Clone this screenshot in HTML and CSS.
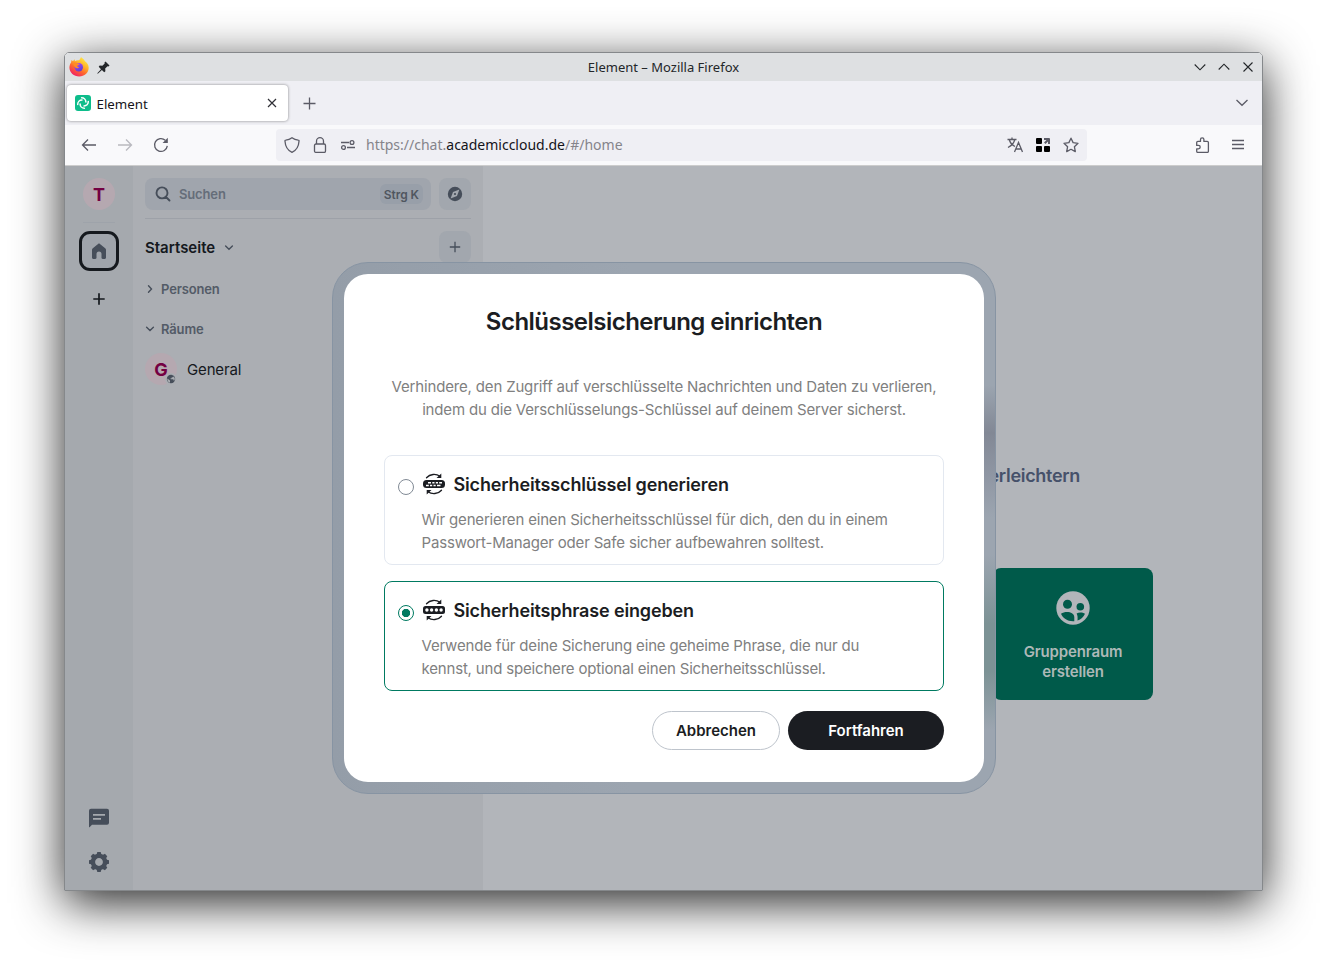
FILE: index.html
```html
<!DOCTYPE html>
<html lang="de">
<head>
<meta charset="utf-8">
<title>Element</title>
<link rel="stylesheet" href="styles.css">
</head>
<body>
<div class="window">
  <header class="titlebar">
    <div class="title-left">
      <svg class="firefox" width="20" height="20" viewBox="0 0 20 20">
        <defs>
          <linearGradient id="fx" x1="0.85" y1="0.05" x2="0.25" y2="1"><stop offset="0" stop-color="#fff04a"/><stop offset=".35" stop-color="#ffb52a"/><stop offset=".62" stop-color="#ff6a2c"/><stop offset="1" stop-color="#f0186c"/></linearGradient>
          <linearGradient id="fy" x1="0.3" y1="0" x2="0.7" y2="1"><stop offset="0" stop-color="#a646ff"/><stop offset="1" stop-color="#5b3fd0"/></linearGradient>
        </defs>
        <path fill="url(#fx)" d="M12 0c1.300 1.300 2.800 2 4 4.200 2.100 1.500 3.700 3.500 3.700 6.600 0 4.900-4.200 8.800-9.500 8.800S.4 15.700.4 10.600c0-2 .8-4 1.700-5.200L2.500 3l1.500 1.300L5.500 2.200l.4 2c1.200-.8 2.400-1 3.900-.9 1-.8 1.700-1.800 2.200-3.300z"/>
        <circle cx="9.800" cy="10.200" r="4.200" fill="url(#fy)"/>
        <path fill="#ff8b24" d="M4.500 6c2-.8 3-.4 4 .6l2 .3c-.4 1-1.200 1.300-2.200 1.600-.3 1.500 1.200 2 2.200 1.500-.8 1.500-3.200 1.700-4.200.5C5 9.300 4.300 8 4.500 6z"/>
      </svg>
      <svg class="pin" width="13" height="13" viewBox="0 0 13 13"><path fill="#232629" d="M8.500.5 12.500 4.500l-1 1-1-.2-2.300 2.300.2 2.700-1.200 1-2.300-2.300L.8 12.700.3 12.200 4 8.200 1.700 5.800l1-1.200 2.700.2 2.300-2.300-.2-1z"/></svg>
    </div>
    <div class="title-text">Element – Mozilla Firefox</div>
    <div class="title-right">
      <svg width="12" height="12" viewBox="0 0 12 12"><path d="M.7 3.500 6 8.800l5.300-5.300"/></svg>
      <svg width="12" height="12" viewBox="0 0 12 12"><path d="M.7 8.500 6 3.200l5.300 5.300"/></svg>
      <svg width="12" height="12" viewBox="0 0 12 12"><path d="m1.500 1.500 9 9m0-9-9 9"/></svg>
    </div>
  </header>

  <div class="tabbar">
    <div class="tab">
      <svg width="16" height="16" viewBox="0 0 16 16"><rect width="16" height="16" rx="3" fill="#0dbd8b"/><g fill="none" stroke="#fff" stroke-width="1.500" stroke-linecap="round"><path id="arc" d="M6.600 2.700a4.300 4.300 0 0 1 4.300 4.300"/><use href="#arc" transform="rotate(90 8 8)"/><use href="#arc" transform="rotate(180 8 8)"/><use href="#arc" transform="rotate(270 8 8)"/></g></svg>
      <span class="tab-name">Element</span>
      <svg class="line dark" width="10" height="10" viewBox="0 0 10 10"><path d="m1 1 8 8m0-8-8 8"/></svg>
    </div>
    <svg class="line newtab" width="13" height="13" viewBox="0 0 13 13"><path d="M6.500.5v12M.5 6.500h12"/></svg>
    <svg class="line tablist" width="14" height="14" viewBox="0 0 14 14"><path d="M1.500 4 7 9.300 12.500 4"/></svg>
  </div>

  <nav class="toolbar">
    <svg class="line back" width="16" height="16" viewBox="0 0 16 16"><path d="M15 8H1.700M7 2.500 1.500 8 7 13.500"/></svg>
    <svg class="line fwd" width="16" height="16" viewBox="0 0 16 16"><path d="M1 8h13.300M9 2.500 14.500 8 9 13.500"/></svg>
    <svg class="line reload" width="16" height="16" viewBox="0 0 16 16"><path d="M14.300 8.800A6.400 6.400 0 1 1 12.300 3.300"/><path d="M14.800.8v5.200H9.600z" fill="#5b5b66" stroke="none"/></svg>
    <div class="urlbar">
      <svg class="line" width="16" height="16" viewBox="0 0 16 16"><path d="M8 .8c1.800 1.400 4 2.200 6.200 2.300.7 0 .9.500.8 1.200-.3 5-2.300 9-7 11-4.700-2-6.700-6-7-11-.1-.7.200-1.200.8-1.200C4 3 6.200 2.200 8 .8z"/></svg>
      <svg class="line" width="16" height="16" viewBox="0 0 16 16"><rect x="2.500" y="7" width="11" height="8.400" rx="1.500"/><path d="M4.500 7V4.200a3.500 3.500 0 0 1 7 0V7"/></svg>
      <svg class="line" width="16" height="16" viewBox="0 0 16 16"><path d="M1 5.500h8M7 10.500h8"/><circle cx="12" cy="5.500" r="1.900"/><circle cx="3.500" cy="10.500" r="1.900"/></svg>
      <span class="url">https://chat.<b>academiccloud.de</b>/#/home</span>
      <svg class="line translate" width="16" height="16" viewBox="0 0 16 16"><path d="M.5 2.500h9M5 .5v2M2.300 2.500C3 6 5.500 8.300 8 9.500M7.800 2.500C7 6 4 9 1 10.500M7.500 15l4-9.500 4 9.500M9 12h5"/></svg>
      <svg width="16" height="16" viewBox="0 0 16 16"><rect x="1" y="1" width="6" height="6" rx="1"/><rect x="1" y="9" width="6" height="6" rx="1"/><rect x="9" y="9" width="6" height="6" rx="1"/><path fill="#5b5b66" d="M9 1h5a1 1 0 0 1 1 1v5h-2V4.500L10.500 7 9 5.500 11.500 3H9z"/></svg>
      <svg class="line" width="16" height="16" viewBox="0 0 16 16"><path stroke-linejoin="round" d="m8 1.200 2.100 4.400 4.900.7-3.600 3.400.9 4.900L8 12.300l-4.300 2.300.9-4.900L1 6.300l4.900-.7z"/></svg>
    </div>
    <svg class="line puzzle" width="16" height="16" viewBox="0 0 16 16"><path stroke-linejoin="round" d="M2.700 7V5.600c0-.8.400-1.200 1.200-1.200h2.600V2.600a1.700 1.700 0 0 1 3.400 0v1.800h3.300c.8 0 1.200.4 1.200 1.200v8.600c0 .8-.4 1.200-1.200 1.200H3.900c-.8 0-1.200-.4-1.200-1.200v-2.400h1.800a1.700 1.700 0 0 0 0-3.400H2.700z"/></svg>
    <svg class="line" width="16" height="16" viewBox="0 0 16 16"><path d="M2 3.500h12M2 7.500h12M2 11.500h12"/></svg>
  </nav>

  <div class="app">
    <aside class="spaces">
      <div class="avatar">T</div>
      <hr class="space-line">
      <div class="home"><svg width="16" height="18" viewBox="0 0 16 18"><path fill="#464e5a" d="M8 1.200 14.200 6.200c.5.400.8.900.8 1.500v7.800c0 .9-.6 1.500-1.500 1.500h-1.800c-.7 0-1.200-.5-1.200-1.200V12a2.500 2.500 0 0 0-5 0v3.800c0 .7-.5 1.200-1.200 1.200H2.500C1.600 17 1 16.400 1 15.500V7.700C1 7.100 1.300 6.600 1.800 6.200z"/></svg></div>
      <svg class="add" width="12" height="12" viewBox="0 0 12 12"><path stroke="#15191e" stroke-width="1.700" d="M6 .3v11.400M.3 6h11.400"/></svg>
      <div class="spaces-end">
        <svg width="20" height="20" viewBox="0 0 20 20"><path fill="#464e5a" d="M2 .8h16a2 2 0 0 1 2 2v12a2 2 0 0 1-2 2H3L.8 19C.4 19.400 0 19.300 0 18.700V2.800a2 2 0 0 1 2-2z"/><path stroke="#a5a9ae" stroke-width="1.700" d="M4 6.900h12M4 10.900h8"/></svg>
        <svg width="20" height="20" viewBox="-10 -10 20 20"><g fill="#464e5a"><path id="cog" d="M-1.700-10h3.400l1.100 4h-5.600z"/><use href="#cog" transform="rotate(45)"/><use href="#cog" transform="rotate(90)"/><use href="#cog" transform="rotate(135)"/><use href="#cog" transform="rotate(180)"/><use href="#cog" transform="rotate(225)"/><use href="#cog" transform="rotate(270)"/><use href="#cog" transform="rotate(315)"/></g><circle r="6.100" fill="none" stroke="#464e5a" stroke-width="4.400"/></svg>
      </div>
    </aside>

    <section class="rooms">
      <div class="search-row">
        <div class="search">
          <svg width="16" height="16" viewBox="0 0 16 16"><path fill="none" stroke="#464e5a" stroke-width="1.900" stroke-linecap="round" d="m14.500 14.500-3.500-3.500M12.500 6.900a5.500 5.500 0 1 1-11 0 5.500 5.500 0 0 1 11 0z"/></svg>
          <span>Suchen</span><kbd>Strg K</kbd>
        </div>
        <div class="square"><svg width="16" height="16" viewBox="0 0 16 16"><circle cx="8" cy="8" r="7.200" fill="#464e5a"/><path fill="#a2a7ae" fill-rule="evenodd" d="M12.400 3.600 10 9.900 3.600 12.400 6 6.100zM8 6.900a1.100 1.100 0 1 0 0 2.200 1.100 1.100 0 0 0 0-2.200z"/></svg></div>
      </div>
      <div class="start-row">
        <h2>Startseite</h2>
        <svg width="10" height="7" viewBox="0 0 10 7"><path class="chev" d="m1.600 2 3.400 3.200L8.400 2"/></svg>
        <div class="square"><svg width="12" height="12" viewBox="0 0 12 12"><path stroke="#464e5a" stroke-width="1.300" d="M6 .8v10.400M.8 6h10.400"/></svg></div>
      </div>
      <div class="group"><svg width="10" height="10" viewBox="0 0 10 10"><path class="chev" d="m3.500 1.800 3 3.200-3 3.200"/></svg><span>Personen</span></div>
      <div class="group"><svg width="10" height="10" viewBox="0 0 10 10"><path class="chev" d="M1.600 3.300 5 6.500l3.400-3.200"/></svg><span>Räume</span></div>
      <div class="room">
        <div class="avatar">G<svg class="globe" width="12" height="12" viewBox="0 0 12 12"><circle cx="6" cy="6" r="6" fill="#abaeb3"/><circle cx="6" cy="6" r="4.200" fill="#464e5a"/><path fill="#abaeb3" d="M2.300 5.500 5 7.500v2.200C3.300 9.300 2.200 7.800 2.300 5.500zM6.500 2.300l1.800.8v1.200H6.700v1H5.500l.3 1h2.400l.8 1.600.9-1.900-.8-2.200z"/></svg></div>
        <span>General</span>
      </div>
    </section>

    <main class="main">
      <h1>erleichtern</h1>
      <div class="tile">
        <svg width="34" height="34" viewBox="0 0 34 34"><circle cx="17" cy="17" r="16.700" fill="#b2b5ba"/><g fill="#005a4a"><circle cx="11.500" cy="13.200" r="4.500"/><circle cx="24.300" cy="15.800" r="3.800"/><path d="M5 22.800c4-3 13-2.500 13.300 3.300V30.200C12 30.700 6.800 27.500 5 22.800zM21.500 29.500c.3-3.500.1-5-.9-7 2.500-1.500 6-1.200 8.400.2-1.500 3.300-4 5.800-7.500 6.800z"/></g></svg>
        <span>Gruppenraum<br>erstellen</span>
      </div>
    </main>

    <div class="modal-frame">
      <div class="modal">
        <h3>Schlüsselsicherung einrichten</h3>
        <p class="intro">Verhindere, den Zugriff auf verschlüsselte Nachrichten und Daten zu verlieren,<br>indem du die Verschlüsselungs-Schlüssel auf deinem Server sicherst.</p>
        <div class="option">
          <i class="radio"></i>
          <div>
            <div class="option-title">
              <svg width="24" height="24" viewBox="0 0 24 24"><g fill="none" stroke="#1b1d22" stroke-width="1.300" stroke-linecap="round"><path d="M4.500 5.800C8 1.800 14 1.500 18 4.300M19.500 18.200C16 22.200 10 22.500 6 19.700"/></g><path fill="#1b1d22" d="M19.300 1.500v4.600h-4.800zM4.700 22.500v-4.600h4.800z"/><rect x="1" y="8" width="22" height="8" rx="3.500" fill="#1b1d22"/><path stroke="#fff" stroke-width="1.500" d="M6 10.700h3M10.300 10.700h2.200M13.800 10.700h2.200M17.200 10.700h2.800M4 13.500h2.800M8 13.500h2.200M11.500 13.500h2.200M15 13.500h3.500"/></svg>
              Sicherheitsschlüssel generieren</div>
            <p>Wir generieren einen Sicherheitsschlüssel für dich, den du in einem<br>Passwort-Manager oder Safe sicher aufbewahren solltest.</p>
          </div>
        </div>
        <div class="option selected">
          <i class="radio"></i>
          <div>
            <div class="option-title">
              <svg width="24" height="24" viewBox="0 0 24 24"><g fill="none" stroke="#1b1d22" stroke-width="1.300" stroke-linecap="round"><path d="M4.500 5.800C8 1.800 14 1.500 18 4.300M19.500 18.200C16 22.200 10 22.500 6 19.700"/></g><path fill="#1b1d22" d="M19.300 1.500v4.600h-4.800zM4.700 22.500v-4.600h4.800z"/><rect x="1" y="8" width="22" height="8" rx="2.500" fill="#1b1d22"/><g fill="#fff"><circle cx="4.900" cy="12" r="1.700"/><circle cx="9.600" cy="12" r="1.700"/><circle cx="14.400" cy="12" r="1.700"/><circle cx="19.100" cy="12" r="1.700"/></g></svg>
              Sicherheitsphrase eingeben</div>
            <p>Verwende für deine Sicherung eine geheime Phrase, die nur du<br>kennst, und speichere optional einen Sicherheitsschlüssel.</p>
          </div>
        </div>
        <div class="buttons"><button class="cancel">Abbrechen</button><button class="next">Fortfahren</button></div>
      </div>
    </div>
  </div>
</div>
</body>
</html>
```
FILE: styles.css
```css
* { box-sizing: border-box; }
body { margin: 0; padding: 52px 64px 76px; height: 967px; background: #fff; font-family: Inter, "Liberation Sans", sans-serif; overflow: hidden; }
svg { display: block; flex: none; }
h1, h2, h3, p { margin: 0; }

.window { width: 1199px; height: 839px; border: 1px solid #85888b; border-radius: 5px 5px 0 0; display: flex; flex-direction: column; box-shadow: 0 12px 48px 0 rgba(0,0,0,.85); }

.titlebar { height: 28px; flex: none; background: #dee0e2; border-radius: 4px 4px 0 0; display: grid; grid-template-columns: 1fr auto 1fr; align-items: center; padding: 0 8px 0 4px; font: 13px "Noto Sans", sans-serif; color: #232629; }
.title-left { display: flex; align-items: center; gap: 8px; }
.title-text { transform: translateX(2px); }
.title-right { display: flex; justify-content: flex-end; gap: 12px; }
.title-right path { fill: none; stroke: #232629; stroke-width: 1.100; }

.tabbar { height: 44px; flex: none; background: #efeff4; display: flex; align-items: center; padding: 0 13px 0 2px; }
.tab { width: 221px; height: 36px; margin-bottom: 1px; background: #fff; border-radius: 4px; box-shadow: 0 0 3px rgba(0,0,0,.45); display: flex; align-items: center; padding: 0 11px 0 8px; font: 13.300px "Noto Sans", sans-serif; color: #15141a; }
.tab-name { flex: 1; padding: 2px 0 0 5.500px; }
.line { fill: none; stroke: #5b5b66; stroke-width: 1.300; }
.line.dark { stroke: #303036; stroke-width: 1.200; }
.newtab { margin: 1px 0 0 15px; }
.tablist { margin-left: auto; }

.toolbar { height: 41px; flex: none; background: #f9f9fb; border-bottom: 1px solid #ccc; display: flex; align-items: center; padding: 0 16px; }
.back, .fwd { margin-right: 20px; }
.fwd { opacity: .4; }
.reload { margin-right: 107px; }
.urlbar { width: 811px; height: 32px; background: #efeff4; border-radius: 4px; display: flex; align-items: center; gap: 12px; padding: 0 8px; }
.url { font: 14px "Noto Sans", sans-serif; color: #85848b; flex: 1; margin-left: -2px; padding-bottom: 2px; }
.url b { font-weight: 400; color: #15141a; }
.puzzle { margin: 0 20px 0 107px; }

.app { flex: 1; position: relative; display: flex; background: #b2b5ba; overflow: hidden; }
.avatar { width: 32px; height: 32px; border-radius: 50%; background: #b5a8b0; color: #740042; font-weight: 700; font-size: 18px; line-height: 33px; text-align: center; position: relative; }

.spaces { width: 68px; background: #a5a9ae; display: flex; flex-direction: column; align-items: center; padding: 12px 0 18px; }
.space-line { width: 32px; height: 1px; margin: 12px 0 8px; border: 0; background: #9ea3aa; }
.home { width: 40px; height: 40px; border: 3px solid #15191e; border-radius: 11px; background: #9fa4ab; display: flex; align-items: center; justify-content: center; }
.add { margin-top: 22px; }
.spaces-end { margin-top: auto; display: flex; flex-direction: column; gap: 24px; }

.rooms { width: 350px; background: #abaeb3; padding: 12px; }
.search-row { display: flex; gap: 8px; padding-bottom: 8px; border-bottom: 1px solid #9da1a8; }
.search { flex: 1; height: 32px; border-radius: 8px; background: #a0a5ad; display: flex; align-items: center; padding: 0 8px 0 10px; font-size: 13px; font-weight: 600; letter-spacing: -.15px; color: #656d79; }
.search span { margin-left: 8px; flex: 1; }
kbd { font: 600 12px Inter, sans-serif; letter-spacing: -.05px; background: #989fa9; border-radius: 6px; padding: 3px 4px 2px; color: #50565f; }
.square { width: 32px; height: 32px; border-radius: 8px; background: #a2a7ae; display: flex; align-items: center; justify-content: center; }
.start-row { display: flex; align-items: center; padding-top: 12px; }
.start-row .square { margin-left: auto; }
.start-row h2 { font-size: 15px; font-weight: 600; color: #15191e; margin-right: 9px; padding-top: 1px; }
.chev { fill: none; stroke: #464e5a; stroke-width: 1.400; stroke-linecap: round; }
.group { display: flex; align-items: center; gap: 6px; height: 40px; font-size: 13px; font-weight: 600; letter-spacing: -.15px; color: #535b67; }
.start-row + .group { margin-top: 6px; }
.room { display: flex; align-items: center; gap: 10px; height: 40px; font-size: 15px; letter-spacing: -.15px; color: #15191e; }
.room .avatar { font-size: 18px; }
.globe { position: absolute; right: 0; bottom: 0; }

.main { flex: 1; display: flex; flex-direction: column; align-items: flex-end; padding: 298px 109px 0 0; }
.main h1 { font-size: 18px; font-weight: 600; line-height: 24px; letter-spacing: -.3px; color: #46516a; margin-right: 73px; }
.tile { width: 160px; height: 132px; margin-top: 80px; border-radius: 8px; background: #005a4a; display: flex; flex-direction: column; align-items: center; padding-top: 23px; color: #adb8b7; font-size: 15px; line-height: 20px; font-weight: 600; letter-spacing: -.15px; text-align: center; }
.tile span { margin-top: 17px; }

.modal-frame { position: absolute; left: 267px; top: 96px; width: 664px; height: 532px; padding: 11px; border: 1px solid #8794a3; border-radius: 36px; background: linear-gradient(180deg, transparent 23%, #828895 32%, #8f96a3 40%, transparent 48%, transparent 55%, #7c9295 68%, #7c9295 77%, transparent 88%) right / 14px 100% no-repeat, linear-gradient(90deg, #949da8, #9ca5b0 45%); }
.modal { height: 508px; border-radius: 24px; background: #fff; padding: 32px 40px; color: #1b1d22; }
.modal h3 { padding-right: 20px; text-align: center; font-size: 24px; line-height: 32px; font-weight: 600; letter-spacing: -.52px; }
.intro { margin-top: 37px; text-align: center; }
.modal p { font-size: 15px; line-height: 23px; letter-spacing: -.165px; color: #808080; white-space: nowrap; }
.option { height: 110px; border: 1px solid #e3e8f0; border-radius: 8px; margin-top: 34px; padding: 16px 13px; display: flex; }
.option.selected { margin-top: 16px; border-color: #007a61; }
.radio { width: 16px; height: 16px; flex: none; border: 1px solid #818a95; border-radius: 50%; margin: 7px 7.500px 0 0; }
.selected .radio { border-color: #007a61; background: radial-gradient(circle, #007a61 0 3.800px, transparent 4.500px); }
.option-title { display: flex; align-items: center; height: 24px; font-size: 18px; font-weight: 600; letter-spacing: -.15px; gap: 8px; }
.option p { margin-top: 12px; letter-spacing: -.178px; }
.buttons { margin-top: 20px; display: flex; justify-content: flex-end; gap: 8px; }
button { height: 39px; border-radius: 20px; font: 600 15px Inter, sans-serif; padding: 0; }
.cancel { width: 128px; border: 1px solid #bec4cc; background: #fff; color: #1b1d22; }
.next { width: 156px; border: 0; background: #1b1d22; color: #fff; }
```
